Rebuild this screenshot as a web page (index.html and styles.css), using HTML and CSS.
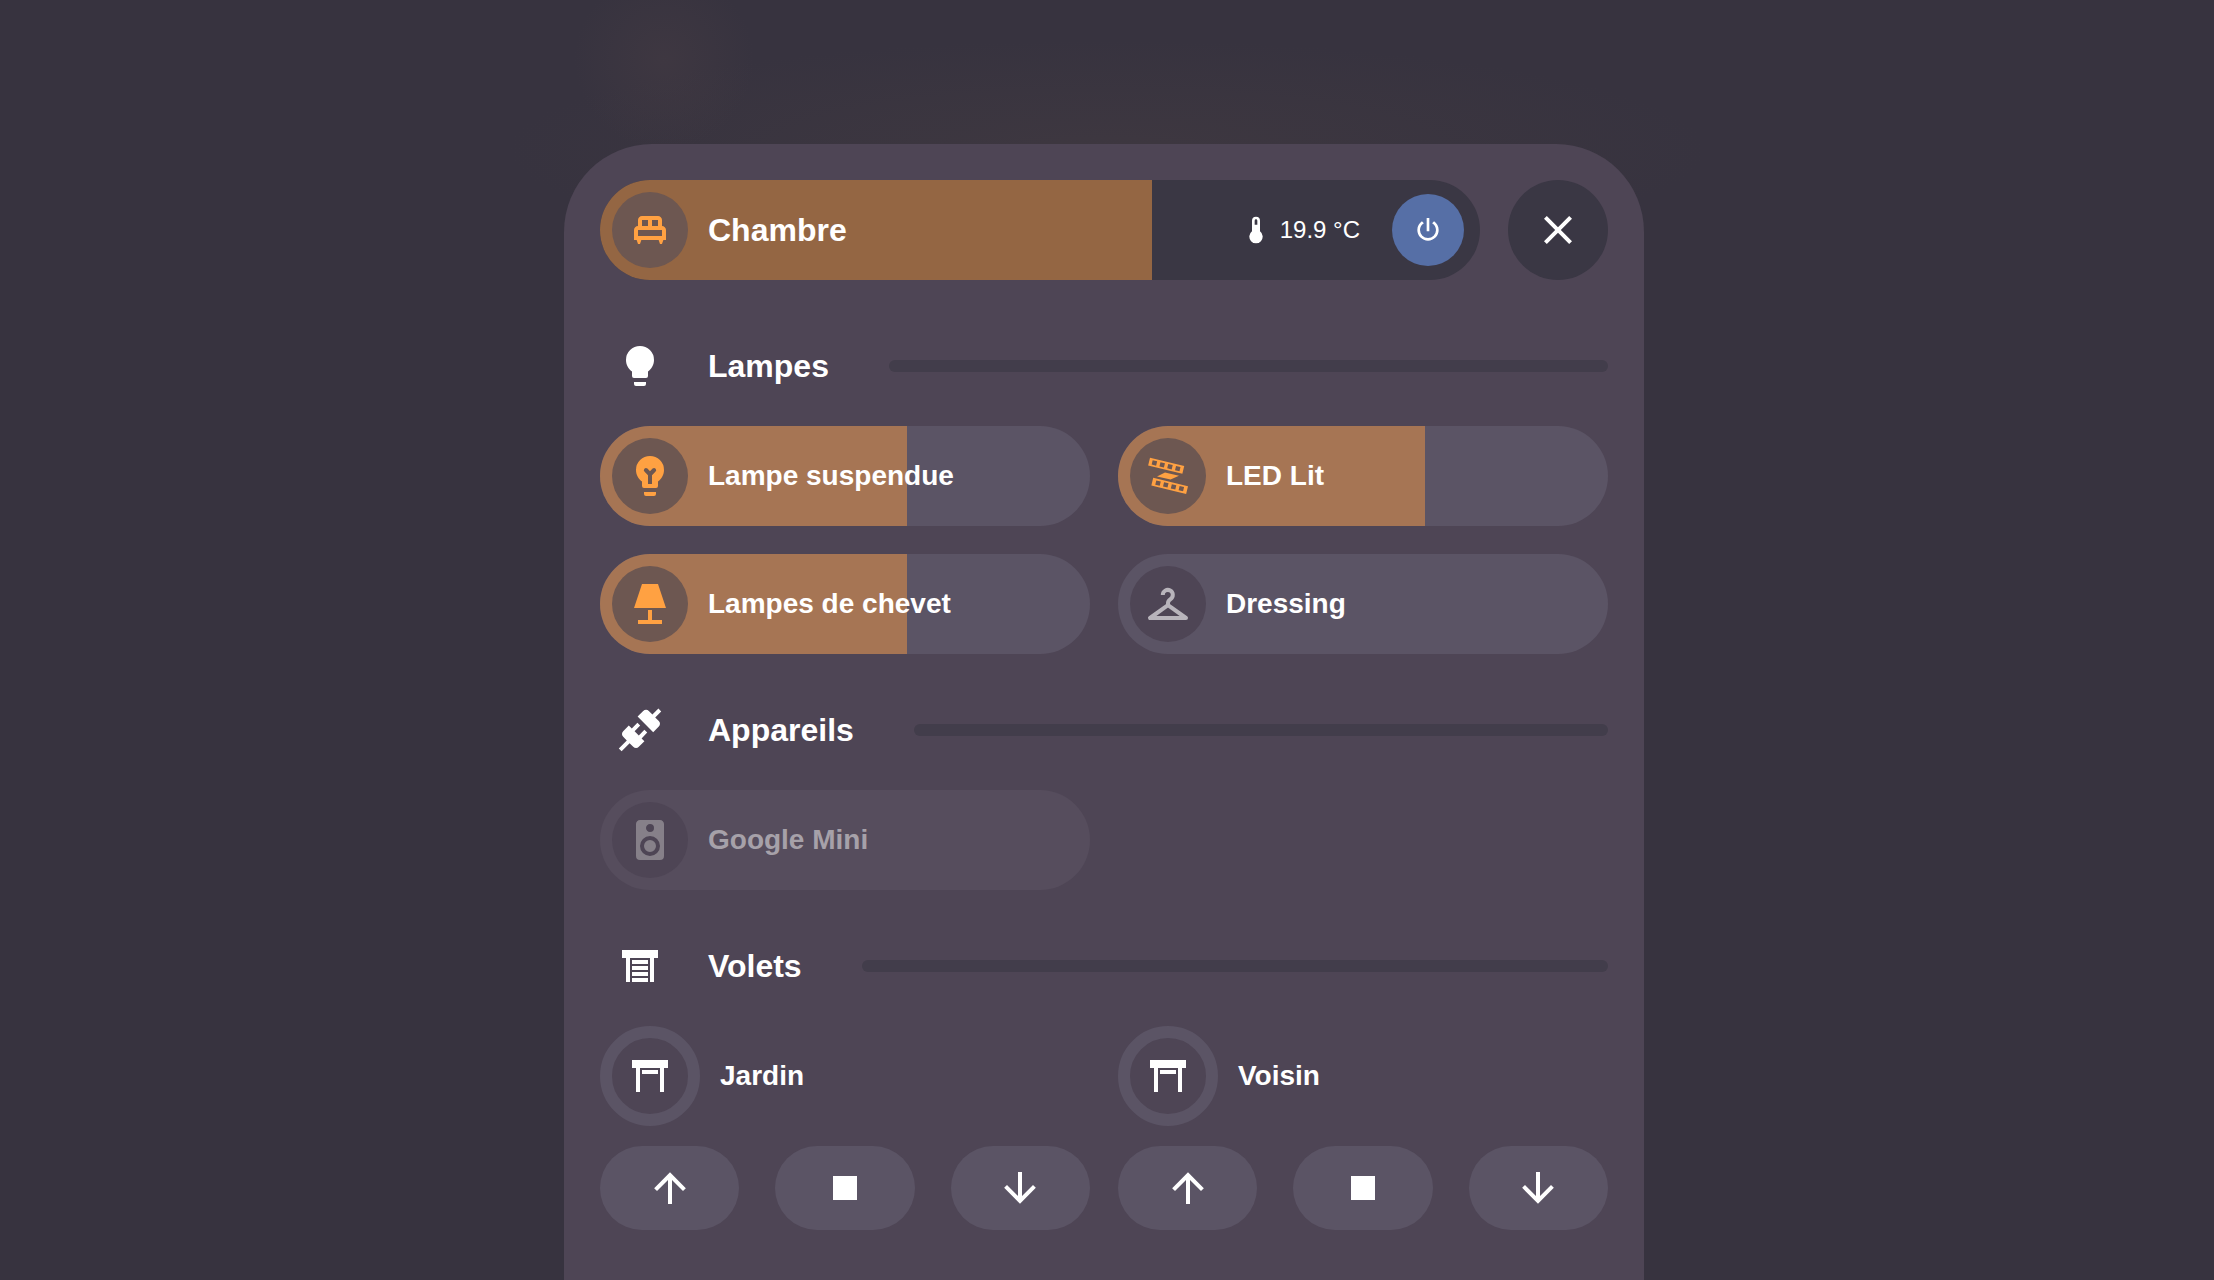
FILE: index.html
```html
<!DOCTYPE html>
<html lang="fr">
<head>
    <meta charset="UTF-8">
    <meta name="viewport" content="width=device-width, initial-scale=1.0">
    <title>Chambre</title>
    <link rel="stylesheet" href="styles.css">
</head>
<body>
    <main class="popup">
        <header class="popup-header">
            <div class="pill room on">
                <input type="range" id="room" min="0" max="100" value="63" style="--level: 62.7%">
                <div class="pill-content">
                    <span class="bubble">
                        <svg class="icon" viewBox="0 0 24 24"><path d="M20 12C20 10.9 19.1 10 18 10V7C18 5.9 17.1 5 16 5H8C6.9 5 6 5.9 6 7V10C4.9 10 4 10.9 4 12V17H5.33L6 19H7L7.67 17H16.33L17 19H18L18.67 17H20V12M16 10H13V7H16V10M8 7H11V10H8V7M6 12H18V15H6V12Z"/></svg>
                    </span>
                    <label class="room-name" for="room">Chambre</label>
                    <span class="temperature">
                        <svg class="icon small" viewBox="0 0 24 24"><path d="M15 13V5A3 3 0 0 0 9 5V13A5 5 0 1 0 15 13M12 4A1 1 0 0 1 13 5V8H11V5A1 1 0 0 1 12 4Z"/></svg>
                        19.9 °C
                    </span>
                    <button class="power" aria-label="Climatisation">
                        <svg class="icon small" viewBox="0 0 24 24"><path d="M16.56 5.44L15.11 6.89C16.84 7.94 18 9.83 18 12A6 6 0 0 1 12 18A6 6 0 0 1 6 12C6 9.83 7.16 7.94 8.88 6.88L7.44 5.44C5.36 6.88 4 9.28 4 12A8 8 0 0 0 12 20A8 8 0 0 0 20 12C20 9.28 18.64 6.88 16.56 5.44M13 3H11V13H13"/></svg>
                    </button>
                </div>
            </div>
            <button class="close" aria-label="Fermer">
                <svg class="icon" viewBox="0 0 24 24"><path d="M19 6.41L17.59 5L12 10.59L6.41 5L5 6.41L10.59 12L5 17.59L6.41 19L12 13.41L17.59 19L19 17.59L13.41 12L19 6.41Z"/></svg>
            </button>
        </header>

        <section>
            <div class="separator">
                <svg class="icon" viewBox="0 0 24 24"><path d="M12 2A7 7 0 0 0 5 9C5 11.38 6.19 13.47 8 14.74V17A1 1 0 0 0 9 18H15A1 1 0 0 0 16 17V14.74C17.81 13.47 19 11.38 19 9A7 7 0 0 0 12 2M9 21A1 1 0 0 0 10 22H14A1 1 0 0 0 15 21V20H9V21Z"/></svg>
                <h2>Lampes</h2>
                <hr>
            </div>
            <div class="cards">
                <div class="pill on">
                    <input type="range" id="suspendue" min="0" max="100" value="63" style="--level: 62.7%">
                    <div class="pill-content">
                        <span class="bubble">
                            <svg class="icon" viewBox="0 0 24 24"><path fill-rule="evenodd" d="M12 2A7 7 0 0 0 5 9C5 11.38 6.19 13.47 8 14.74V17A1 1 0 0 0 9 18H15A1 1 0 0 0 16 17V14.74C17.81 13.47 19 11.38 19 9A7 7 0 0 0 12 2M11 16V11.6L9.3 9.9A1 1 0 0 1 10.7 8.3L12 9.6L13.3 8.3A1 1 0 0 1 14.7 9.9L13 11.6V16ZM9 21A1 1 0 0 0 10 22H14A1 1 0 0 0 15 21V20H9V21Z"/></svg>
                        </span>
                        <label for="suspendue">Lampe suspendue</label>
                    </div>
                </div>
                <div class="pill on">
                    <input type="range" id="led" min="0" max="100" value="63" style="--level: 62.7%">
                    <div class="pill-content">
                        <span class="bubble">
                            <svg class="icon" viewBox="0 0 24 24">
                                <path transform="translate(3 2.9) rotate(13.5)" fill-rule="evenodd" d="M0 0H17.6V4H0ZM1.6 .9V3.1H3.9V.9ZM5.6 .9V3.1H7.9V.9ZM9.6 .9V3.1H11.9V.9ZM13.6 .9V3.1H15.9V.9Z"/>
                                <path transform="translate(4.6 12.9) rotate(13.5)" fill-rule="evenodd" d="M0 0H17.9V4H0ZM1.8 .9V3.1H4.1V.9ZM5.8 .9V3.1H8.1V.9ZM9.8 .9V3.1H12.1V.9ZM13.8 .9V3.1H16.1V.9Z"/>
                                <path d="M10.5 10.2L17.5 11.9L13.3 13.8L6.5 12.2Z"/>
                            </svg>
                        </span>
                        <label for="led">LED Lit</label>
                    </div>
                </div>
                <div class="pill on">
                    <input type="range" id="chevet" min="0" max="100" value="63" style="--level: 62.7%">
                    <div class="pill-content">
                        <span class="bubble">
                            <svg class="icon" viewBox="0 0 24 24"><path d="M8 2H16L20 14H4L8 2M11 15H13V20H18V22H6V20H11V15Z"/></svg>
                        </span>
                        <label for="chevet">Lampes de chevet</label>
                    </div>
                </div>
                <button class="pill">
                    <span class="pill-content">
                        <span class="bubble">
                            <svg class="icon line" viewBox="0 0 24 24"><path d="M9.4 7.5A2.5 2.5 0 1 1 13.2 9.6C12.4 10.1 12 10.7 12 11.5V12.6M12 12.6L3 19H21L12 12.6Z"/></svg>
                        </span>
                        <span>Dressing</span>
                    </span>
                </button>
            </div>
        </section>

        <section>
            <div class="separator">
                <svg class="icon" viewBox="0 0 24 24"><path d="M21.4 7.5C22.2 8.3 22.2 9.6 21.4 10.3L18.6 13.1L10.8 5.3L13.6 2.5C14.4 1.7 15.7 1.7 16.4 2.5L18.2 4.3L21.2 1.3L22.6 2.7L19.6 5.7L21.4 7.5M15.6 13.3L14.2 11.9L11.4 14.7L9.3 12.6L12.1 9.8L10.7 8.4L7.9 11.2L6.4 9.8L3.6 12.6C2.8 13.4 2.8 14.7 3.6 15.4L5.4 17.2L1.4 21.2L2.8 22.6L6.8 18.6L8.6 20.4C9.4 21.2 10.7 21.2 11.4 20.4L14.2 17.6L12.8 16.2L15.6 13.3Z"/></svg>
                <h2>Appareils</h2>
                <hr>
            </div>
            <div class="cards">
                <button class="pill unavailable">
                    <span class="pill-content">
                        <span class="bubble">
                            <svg class="icon" viewBox="0 0 24 24"><path d="M12 12A3 3 0 0 0 9 15A3 3 0 0 0 12 18A3 3 0 0 0 15 15A3 3 0 0 0 12 12M12 20A5 5 0 0 1 7 15A5 5 0 0 1 12 10A5 5 0 0 1 17 15A5 5 0 0 1 12 20M12 4A2 2 0 0 1 14 6A2 2 0 0 1 12 8C10.89 8 10 7.1 10 6C10 4.89 10.89 4 12 4M17 2H7C5.89 2 5 2.89 5 4V20A2 2 0 0 0 7 22H17A2 2 0 0 0 19 20V4C19 2.89 18.1 2 17 2Z"/></svg>
                        </span>
                        <span>Google Mini</span>
                    </span>
                </button>
            </div>
        </section>

        <section>
            <div class="separator">
                <svg class="icon" viewBox="0 0 24 24"><path d="M3 4H21V8H19V20H17V8H7V20H5V8H3V4M8 9H16V11H8V9M8 12H16V14H8V12M8 15H16V17H8V15M8 18H16V20H8V18Z"/></svg>
                <h2>Volets</h2>
                <hr>
            </div>
            <div class="cards">
                <div class="cover">
                    <div class="cover-name">
                        <span class="ring">
                            <svg class="icon" viewBox="0 0 24 24"><path d="M3 4H21V8H19V20H17V8H7V20H5V8H3V4M8 9H16V11H8V9Z"/></svg>
                        </span>
                        <h3>Jardin</h3>
                    </div>
                    <div class="cover-buttons">
                        <button aria-label="Ouvrir"><svg class="icon" viewBox="0 0 24 24"><path d="M13 20H11V8L5.5 13.5L4.08 12.08L12 4.16L19.92 12.08L18.5 13.5L13 8V20Z"/></svg></button>
                        <button aria-label="Arrêter"><svg class="icon" viewBox="0 0 24 24"><path d="M18 18H6V6H18V18Z"/></svg></button>
                        <button aria-label="Fermer"><svg class="icon" viewBox="0 0 24 24"><path d="M11 4H13V16L18.5 10.5L19.92 11.92L12 19.84L4.08 11.92L5.5 10.5L11 16V4Z"/></svg></button>
                    </div>
                </div>
                <div class="cover">
                    <div class="cover-name">
                        <span class="ring">
                            <svg class="icon" viewBox="0 0 24 24"><path d="M3 4H21V8H19V20H17V8H7V20H5V8H3V4M8 9H16V11H8V9Z"/></svg>
                        </span>
                        <h3>Voisin</h3>
                    </div>
                    <div class="cover-buttons">
                        <button aria-label="Ouvrir"><svg class="icon" viewBox="0 0 24 24"><path d="M13 20H11V8L5.5 13.5L4.08 12.08L12 4.16L19.92 12.08L18.5 13.5L13 8V20Z"/></svg></button>
                        <button aria-label="Arrêter"><svg class="icon" viewBox="0 0 24 24"><path d="M18 18H6V6H18V18Z"/></svg></button>
                        <button aria-label="Fermer"><svg class="icon" viewBox="0 0 24 24"><path d="M11 4H13V16L18.5 10.5L19.92 11.92L12 19.84L4.08 11.92L5.5 10.5L11 16V4Z"/></svg></button>
                    </div>
                </div>
            </div>
        </section>
    </main>
</body>
</html>
```
FILE: styles.css
```css
:root {
    --background: #37333f;
    --popup: #4e4555;
    --card: #5b5465;
    --dark: #3a3744;
    --line: #423d4b;
    --light: #a67554;
    --light-dark: #946643;
    --bubble-on: #6d5751;
    --orange: #ffa142;
    --blue: #566fa6;
}

* {
    box-sizing: border-box;
    margin: 0;
    padding: 0;
}

body {
    display: flex;
    justify-content: center;
    min-height: 100vh;
    padding: 144px 6px 0 0;
    background:
        radial-gradient(circle at 30% 60px, rgba(84, 68, 72, 0.25), transparent 90px),
        radial-gradient(ellipse 600px 110px at 50% 150px, rgba(72, 62, 66, 0.4), transparent),
        var(--background);
    color: #fff;
    font-family: "Liberation Sans", Arial, sans-serif;
    font-size: 28px;
    font-weight: bold;
}

button {
    border: none;
    color: inherit;
    font: inherit;
    cursor: pointer;
}

.icon {
    display: block;
    width: 48px;
    height: 48px;
    fill: currentColor;
}

.icon.small {
    width: 32px;
    height: 32px;
}

.icon.line {
    fill: none;
    stroke: currentColor;
    stroke-width: 2;
    stroke-linejoin: round;
}

.popup {
    width: 100%;
    max-width: 1080px;
    padding: 36px 36px 50px;
    border-radius: 88px 88px 0 0;
    background: var(--popup);
}

.popup-header {
    display: flex;
    gap: 28px;
    margin-bottom: 62px;
}

/* Pill cards, with the slider stacked under the content */
.pill {
    display: grid;
    height: 100px;
    border-radius: 50px;
    background: var(--card);
    overflow: hidden;
    text-align: left;
}

.pill > * {
    grid-area: 1 / 1;
}

.pill input {
    appearance: none;
    width: 100%;
    height: 100px;
    background: linear-gradient(to right, var(--light) var(--level), transparent var(--level));
    cursor: pointer;
}

.pill input::-webkit-slider-thumb {
    appearance: none;
    width: 1px;
    height: 100px;
}

.pill-content {
    display: flex;
    align-items: center;
    gap: 20px;
    padding: 0 16px 0 12px;
    pointer-events: none;
}

.bubble {
    display: grid;
    place-items: center;
    width: 76px;
    height: 76px;
    border-radius: 50%;
    background: var(--popup);
    color: #b8b4bb;
}

.on .bubble {
    background: var(--bubble-on);
    color: var(--orange);
}

.unavailable {
    background: #564d5d;
    color: #a6a1a9;
}

.unavailable .bubble {
    color: #868089;
}

.room {
    flex: 1;
    background: var(--dark);
}

.room input {
    --light: var(--light-dark);
}

.room-name {
    flex: 1;
    font-size: 32px;
}

.temperature {
    display: flex;
    align-items: center;
    gap: 8px;
    margin-right: 12px;
    font-size: 24px;
    font-weight: normal;
}

.power,
.close {
    display: grid;
    place-items: center;
    border-radius: 50%;
}

.power {
    width: 72px;
    height: 72px;
    background: var(--blue);
    pointer-events: auto;
}

.close {
    width: 100px;
    height: 100px;
    background: var(--dark);
}

.separator {
    display: flex;
    align-items: center;
    height: 48px;
    margin: 52px 0 36px;
}

.separator .icon {
    margin: 0 44px 0 16px;
}

.separator h2 {
    margin-right: 60px;
    font-size: 32px;
}

.separator hr {
    flex: 1;
    height: 12px;
    border: none;
    border-radius: 6px;
    background: var(--line);
}

.cards {
    display: grid;
    grid-template-columns: 1fr 1fr;
    gap: 28px;
}

.cover-name {
    display: flex;
    align-items: center;
    gap: 20px;
    margin-bottom: 20px;
}

.cover-name h3 {
    font-size: 28px;
}

.ring {
    display: grid;
    place-items: center;
    width: 100px;
    height: 100px;
    border: 12px solid var(--card);
    border-radius: 50%;
}

.cover-buttons {
    display: grid;
    grid-template-columns: repeat(3, 1fr);
    gap: 36px;
}

.cover-buttons button {
    display: grid;
    place-items: center;
    height: 84px;
    border-radius: 42px;
    background: var(--card);
}
```
